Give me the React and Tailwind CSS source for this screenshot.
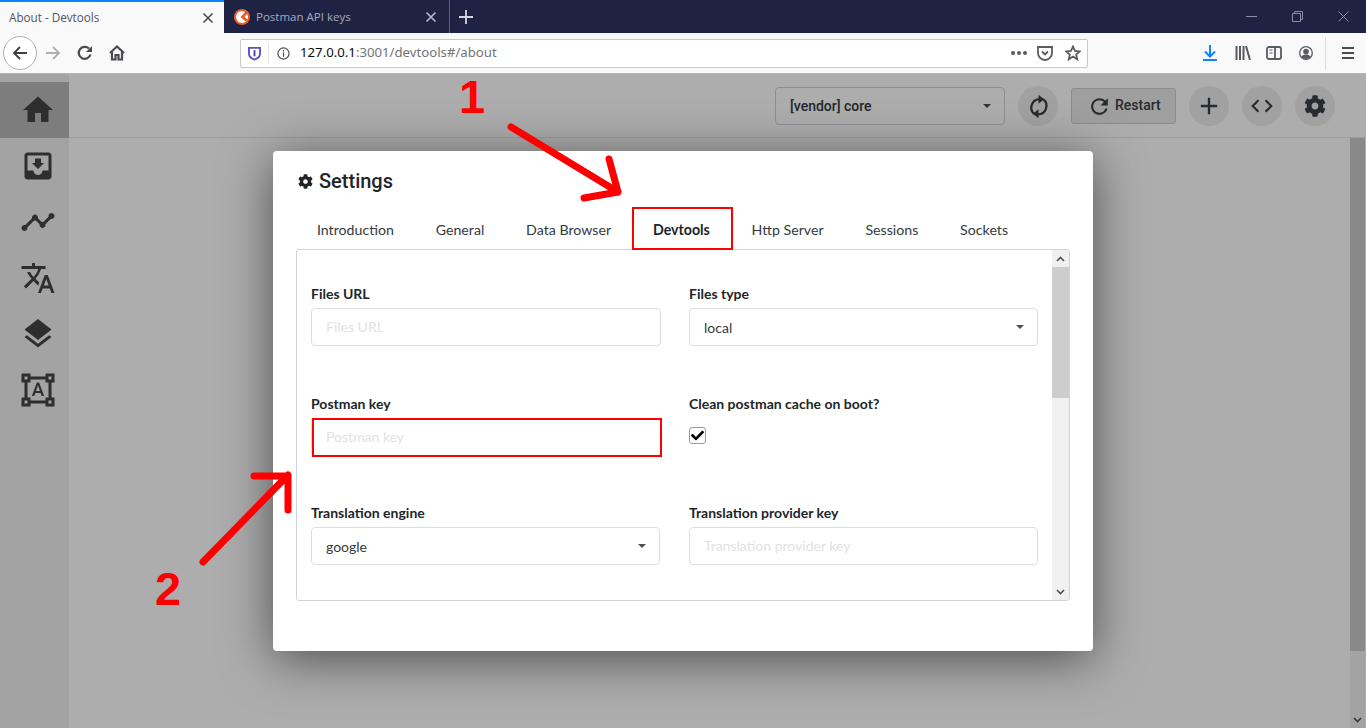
import { FaCheck, FaCog } from "react-icons/fa";
import {
  MdAdd,
  MdCode,
  MdFormatShapes,
  MdHome,
  MdLayers,
  MdMoveToInbox,
  MdRefresh,
  MdTimeline,
  MdTranslate,
} from "react-icons/md";

const sideItems = [MdMoveToInbox, MdTimeline, MdTranslate, MdLayers, MdFormatShapes];
const tabs = ["Introduction", "General", "Data Browser", "Devtools", "Http Server", "Sessions", "Sockets"];

const Caret = ({ className = "" }) => (
  <span className={`w-0 h-0 border-x-[4px] border-x-transparent border-t-[4px] border-t-[#495057] ${className}`} />
);

const Field = ({ label, children }) => (
  <div className="flex flex-col">
    <label className="h-[21px] mb-[4px] text-[14px] leading-[21px] font-bold text-[#212529]">{label}</label>
    {children}
  </div>
);

const TextInput = ({ placeholder }) => (
  <div className="h-[38px] px-[14px] pb-[1px] flex items-center border border-[#dcdfe2] rounded-[4px] text-[14px] text-[#e2e2e2]">
    {placeholder}
  </div>
);

const SelectInput = ({ value }) => (
  <div className="h-[38px] pl-[14px] pr-[13px] flex items-center justify-between border border-[#dcdfe2] rounded-[4px] text-[14px] text-[#343a40]">
    <span>{value}</span>
    <Caret />
  </div>
);

const RoundButton = ({ children }) => (
  <button className="w-[40px] h-[40px] rounded-full bg-[#eeeeee] flex items-center justify-center text-[#3a3f44]">
    {children}
  </button>
);

const BrowserChrome = () => (
  <div className="shrink-0 font-['Open_Sans',sans-serif]">
    {/* tabs */}
    <div className="h-[33px] bg-[#1e2344] flex items-stretch">
      <div className="w-[224px] bg-[#f9f9fa] border-t-2 border-[#0a84ff] pl-[9px] pr-[10px] flex items-center justify-between">
        <span className="text-[11.700px] text-[#55555a]">About - Devtools</span>
        <svg width="12" height="12" viewBox="0 0 12 12" stroke="#4a4a4f" strokeWidth="1.6"><path d="M1.5 1.5l9 9M10.5 1.5l-9 9" /></svg>
      </div>
      <div className="w-[226px] pl-[10px] pr-[12px] flex items-center border-r border-[#5b5f78]">
        <svg width="16" height="16" viewBox="0 0 16 16" className="shrink-0">
          <circle cx="8" cy="8" r="8" fill="#ef5b25" />
          <circle cx="8" cy="8" r="6" fill="#fff" />
          <path d="M12 2L6.500 8l5 4.500 2-2-3-2.700L14 4z" fill="#ef5b25" />
        </svg>
        <span className="ml-[6px] text-[11.500px] text-[#a7a9ba]">Postman API keys</span>
        <svg width="12" height="12" viewBox="0 0 12 12" stroke="#b9bbc8" strokeWidth="1.6" className="ml-auto"><path d="M1.5 1.5l9 9M10.5 1.5l-9 9" /></svg>
      </div>
      <div className="w-[32px] flex items-center justify-center">
        <svg width="14" height="14" viewBox="0 0 14 14" stroke="#d4d5dd" strokeWidth="1.8"><path d="M7 0v14M0 7h14" /></svg>
      </div>
      <div className="ml-auto flex items-center pr-[17px] gap-[35px]">
        <svg width="11" height="11" viewBox="0 0 11 11" stroke="#8d8fa3"><path d="M0 5.5h11" /></svg>
        <svg width="11" height="11" viewBox="0 0 11 11" fill="none" stroke="#8d8fa3"><path d="M.5 2.5h8v8h-8zM2.5 2.5v-2h8v8h-2" /></svg>
        <svg width="11" height="11" viewBox="0 0 11 11" stroke="#8d8fa3"><path d="M.5.5l10 10M10.5.5l-10 10" /></svg>
      </div>
    </div>
    {/* nav */}
    <div className="h-[41px] bg-[#f9f9fa] border-b border-[#b5b5b7] flex items-center pl-[3px]">
      <div className="w-[34px] h-[34px] rounded-full bg-white border border-[#b1b1b3] flex items-center justify-center">
        <svg width="16" height="16" viewBox="0 0 16 16" fill="none" stroke="#3f3f44" strokeWidth="1.8"><path d="M15 8H2M8 2L2 8l6 6" /></svg>
      </div>
      <svg width="16" height="16" viewBox="0 0 16 16" fill="none" stroke="#b1b1b3" strokeWidth="1.8" className="ml-[8px]"><path d="M1 8h13M8 2l6 6-6 6" /></svg>
      <svg width="16" height="16" viewBox="0 0 16 16" fill="none" stroke="#4a4a4f" strokeWidth="2.2" className="ml-[16px]"><path d="M13.5 9.5A6 6 0 1 1 12 3.6" /><path d="M15 1v6H9z" fill="#4a4a4f" stroke="none" /></svg>
      <svg width="16" height="16" viewBox="0 0 16 16" fill="none" stroke="#4a4a4f" strokeWidth="2.2" className="ml-[16px]"><path d="M1 8l7-6.5L15 8M3 7v7.5h3.5V10h3v4.5H13V7" /></svg>

      <div className="ml-[115px] w-[848px] h-[29px] bg-white border border-[#c8c8c9] rounded-[2px] flex items-center pl-[7px] pr-[6px]">
        <svg width="13" height="15" viewBox="0 0 14 15" className="shrink-0">
          <path d="M1 1.5h12v6c0 3.5-3 5.5-6 6.5-3-1-6-3-6-6.5z" fill="#fff" stroke="#5d4fc4" strokeWidth="2" />
          <path d="M6 4h2v6.5H6z" fill="#3a3fb0" />
        </svg>
        <span className="ml-[7px] w-px h-[21px] bg-[#e4e4e5]" />
        <svg width="13" height="13" viewBox="0 0 14 14" fill="none" stroke="#4a4a4f" strokeWidth="1.3" className="ml-[8px]"><circle cx="7" cy="7" r="6" /><path d="M7 6v4.5M7 3.2v1.6" /></svg>
        <span className="ml-[10px] text-[13.200px] text-[#737373] font-['Noto_Sans',sans-serif]"><span className="text-[#0c0c0d]">127.0.0.1</span>:3001/devtools#/about</span>
        <span className="ml-auto flex gap-[2px]">
          <i className="w-[4px] h-[4px] rounded-full bg-[#5a5a5f]" />
          <i className="w-[4px] h-[4px] rounded-full bg-[#5a5a5f]" />
          <i className="w-[4px] h-[4px] rounded-full bg-[#5a5a5f]" />
        </span>
        <svg width="16" height="15" viewBox="0 0 16 15" fill="none" stroke="#5a5a5f" strokeWidth="1.8" className="ml-[10px]"><path d="M1 1h14v6a7 7 0 0 1-14 0z" /><path d="M5 5.5l3 3 3-3" /></svg>
        <svg width="16" height="16" viewBox="0 0 16 16" fill="none" stroke="#5a5a5f" strokeWidth="1.8" className="ml-[12px]"><path d="M8 1.5l2 4.4 4.7.5-3.5 3.2 1 4.700L8 11.500l-4.200 2.800 1-4.700L1.300 6.400l4.700-.5z" /></svg>
      </div>

      <svg width="14" height="16" viewBox="0 0 14 16" fill="none" stroke="#0a84ff" strokeWidth="2" className="ml-[115px]"><path d="M7 0v11M2 6.500l5 5 5-5M0 15h14" /></svg>
      <svg width="16" height="14" viewBox="0 0 16 14" fill="none" stroke="#5a5a5f" strokeWidth="2" className="ml-[18px]"><path d="M1.500 0v14M5 0v14M8.500 0v14M11 0l4 14" /></svg>
      <svg width="16" height="14" viewBox="0 0 16 14" fill="none" stroke="#5a5a5f" strokeWidth="1.800" className="ml-[15px]"><rect x="1" y="1" width="14" height="12" rx="2" /><path d="M9 1v12" /><path d="M3.500 4h3M3.500 7h3" strokeWidth="1.200" /></svg>
      <svg width="14" height="14" viewBox="0 0 14 14" className="ml-[17px]"><circle cx="7" cy="7" r="6.300" fill="none" stroke="#5a5a5f" strokeWidth="1.300" /><circle cx="7" cy="5.500" r="2.800" fill="#5a5a5f" /><path d="M2.500 11c1-2 2.500-2.500 4.500-2.500s3.500.5 4.500 2.500a6 6 0 0 1-9 0z" fill="#5a5a5f" /></svg>
      <span className="ml-[12px] w-px h-[33px] bg-[#dcdcdd]" />
      <svg width="14" height="12" viewBox="0 0 14 12" stroke="#4a4a4f" strokeWidth="2" className="ml-[15px]"><path d="M1 1h12M1 6h12M1 11h12" /></svg>
    </div>
  </div>
);

const SettingsModal = () => (
  <div className="w-[820px] h-[500px] bg-white rounded-[4px] shadow-[0_8px_50px_rgba(0,0,0,0.55)] px-[23px] pt-[17px] font-['Lato',sans-serif]">
    <h2 className="h-[26px] flex items-center text-[20px] font-medium text-[#212529] font-['Roboto',sans-serif]">
      <FaCog size={15} className="ml-[2px] mr-[6px]" />
      Settings
    </h2>
    <div className="mt-[13px] h-[42px] pt-[3px] flex items-center">
      {tabs.map((tab) => (
        <span
          key={tab}
          className={`px-[20.900px] text-[14.200px] ${tab === "Devtools" ? "font-bold text-[#212529]" : "text-[#343a40]"}`}
        >
          {tab}
        </span>
      ))}
    </div>
    <div className="w-[774px] h-[352px] border border-[#ced4da] rounded-[3px] flex overflow-hidden">
      <div className="flex-1 pl-[14px] pt-[33px] grid grid-cols-[350px_349px] gap-x-[28px] gap-y-[46.700px] content-start">
        <Field label="Files URL"><TextInput placeholder="Files URL" /></Field>
        <Field label="Files type"><SelectInput value="local" /></Field>
        <Field label="Postman key"><TextInput placeholder="Postman key" /></Field>
        <Field label="Clean postman cache on boot?">
          <div className="mt-[9px] w-[17px] h-[17px] bg-white border border-[#9a9a9a] rounded-[3px] flex items-center justify-center">
            <FaCheck size={13} className="text-black" />
          </div>
        </Field>
        <Field label="Translation engine"><div className="w-[349px]"><SelectInput value="google" /></div></Field>
        <Field label="Translation provider key"><TextInput placeholder="Translation provider key" /></Field>
      </div>
      <div className="w-[17px] bg-[#f0f0f0] flex flex-col">
        <div className="h-[17px] flex items-center justify-center">
          <svg width="9" height="6" viewBox="0 0 9 6" fill="none" stroke="#505050" strokeWidth="1.600"><path d="M1 5l3.500-3.500L8 5" /></svg>
        </div>
        <div className="h-[131px] bg-[#cdcdcd]" />
        <div className="mt-auto h-[17px] flex items-center justify-center">
          <svg width="9" height="6" viewBox="0 0 9 6" fill="none" stroke="#505050" strokeWidth="1.600"><path d="M1 1l3.500 3.500L8 1" /></svg>
        </div>
      </div>
    </div>
  </div>
);

export default function App() {
  return (
    <div className="relative w-[1366px] h-[728px] overflow-hidden flex flex-col bg-white">
      <BrowserChrome />

      <div className="relative flex-1 flex min-h-0 font-['Roboto',sans-serif]">
        {/* sidebar */}
        <aside className="w-[69px] bg-[#f0f0f0] pt-[8px] flex flex-col text-[#454545]">
          <div className="h-[56px] pl-[6px] bg-[#b8b8b8] flex items-center justify-center"><MdHome size={36} /></div>
          {sideItems.map((Icon, i) => (
            <div key={i} className="h-[56px] pl-[6px] flex items-center justify-center"><Icon size={36} /></div>
          ))}
        </aside>

        <main className="flex-1 flex flex-col bg-white">
          <div className="h-[64px] shrink-0 border-b border-[#e6e6e6] flex items-center justify-end pr-[31px] pt-[1px]">
            <div className="w-[230px] h-[38px] pl-[14px] pr-[13px] flex items-center justify-between border border-[#ced4da] rounded-[4px] text-[14px] font-medium text-[#343a40]">
              <span>[vendor] core</span>
              <Caret />
            </div>
            <div className="ml-[13px]">
              <RoundButton>
                <svg width="27" height="27" viewBox="0 0 24 24" fill="none" stroke="currentColor" strokeWidth="2">
                  <path d="M13 5.500A7.500 7.500 0 0 0 8 18.500" />
                  <path d="M11 19A7.500 7.500 0 0 0 16 5.500" />
                  <path d="M12 1.500L17 5.500L12 9.500z" fill="currentColor" stroke="none" />
                  <path d="M12 22.500L7 18.500L12 14.500z" fill="currentColor" stroke="none" />
                </svg>
              </RoundButton>
            </div>
            <button className="ml-[13px] w-[105px] h-[36px] pl-[15px] rounded-[3px] border border-[#ccd0d3] bg-[#ebebeb] flex items-center gap-[3px] text-[14px] font-medium text-[#3a3f44]">
              <MdRefresh size={25} />
              <span className="-mt-[1px]">Restart</span>
            </button>
            <div className="ml-[13px]"><RoundButton><MdAdd size={28} /></RoundButton></div>
            <div className="ml-[13px]"><RoundButton><MdCode size={26} /></RoundButton></div>
            <div className="ml-[13px]"><RoundButton><FaCog size={22} /></RoundButton></div>
          </div>

          {/* page scrollbar */}
          <div className="flex-1 min-h-0 flex justify-end pr-[1px]">
            <div className="w-[15px] bg-[#f1f1f1] flex flex-col items-center">
              <div className="w-full h-[513px] bg-[#cbcbcb]" />
              <svg width="9" height="6" viewBox="0 0 9 6" fill="none" stroke="#505050" strokeWidth="1.600" className="mt-auto mb-[5px]"><path d="M1 1l3.500 3.500L8 1" /></svg>
            </div>
          </div>
        </main>

        {/* dimmed backdrop and dialog */}
        <div className="absolute inset-0 bg-[rgba(0,0,0,0.32)] flex justify-center items-start pt-[77px]">
          <SettingsModal />
        </div>
      </div>

      {/* red annotations drawn on the screenshot */}
      <svg className="absolute inset-0 pointer-events-none" width="1366" height="728" fill="none" stroke="#ff0000" strokeWidth="7" strokeLinecap="round" strokeLinejoin="round">
        <path d="M511 127L618 192M609 159L618 192L584 198" />
        <path d="M203 562L288 475M254 476H288V510" />
      </svg>
      <div className="absolute left-[632px] top-[207px] w-[101px] h-[43px] border-2 border-[#ff0000] pointer-events-none" />
      <div className="absolute left-[312px] top-[418px] w-[350px] h-[39px] border-2 border-[#ff0000] pointer-events-none" />
      <div className="absolute left-[459px] top-[70px] text-[47px] leading-[54px] font-bold text-[#ff0000] font-['Liberation_Sans',sans-serif]">1</div>
      <div className="absolute left-[155px] top-[562px] text-[47px] leading-[54px] font-bold text-[#ff0000] font-['Liberation_Sans',sans-serif]">2</div>
    </div>
  );
}
